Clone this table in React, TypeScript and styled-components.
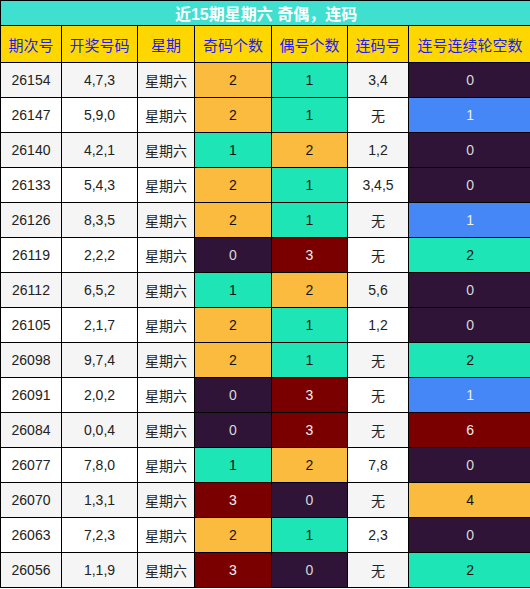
import React from "react";
import styled, { createGlobalStyle } from "styled-components";

const GlobalStyle = createGlobalStyle`
  html, body { margin: 0; padding: 0; background: #ffffff; overflow: hidden; }
  body { font-family: "Liberation Sans", "Noto Sans CJK SC", Arial, sans-serif; }
`;

const Table = styled.table`
  width: 531px;
  border-collapse: collapse;
  table-layout: fixed;
  font-family: "Liberation Sans", "Noto Sans CJK SC", Arial, sans-serif;
`;

const TitleCell = styled.th`
  height: 24px;
  padding: 0;
  background: #40e0d0;
  color: #ffffff;
  font-size: 16px;
  font-weight: bold;
  text-align: center;
  border: 1px solid #000;
  font-family: "Liberation Sans", "Noto Sans CJK SC", sans-serif;
`;

const HeadCell = styled.th`
  height: 36px;
  padding: 0;
  background: #ffd700;
  color: #1c1cf0;
  font-size: 15px;
  font-weight: normal;
  text-align: center;
  border: 1px solid #000;
  font-family: "Noto Sans CJK SC", sans-serif;
`;

const Row = styled.tr<{ $alt: boolean }>`
  height: 35px;
  background: ${(p) => (p.$alt ? "#f5f5f5" : "#ffffff")};
`;

const palette: Record<string, { bg: string; fg: string }> = {
  purple: { bg: "#2f1437", fg: "#d8d8d8" },
  teal: { bg: "#1de5b6", fg: "#111111" },
  orange: { bg: "#fbbb3e", fg: "#111111" },
  maroon: { bg: "#7a0000", fg: "#f0f0f0" },
  blue: { bg: "#4587f6", fg: "#f0f0f0" },
};

const Cell = styled.td<{ $tone?: string }>`
  padding: 0;
  text-align: center;
  font-size: 14px;
  color: ${(p) => (p.$tone ? palette[p.$tone].fg : "#222222")};
  background: ${(p) => (p.$tone ? palette[p.$tone].bg : "transparent")};
  border: 1px solid #000;
`;

const CjkCell = styled(Cell)`
  font-family: "Noto Sans CJK SC", sans-serif;
  font-size: 14px;
`;

const countTone = ["purple", "teal", "orange", "maroon"];
const gapTone: Record<number, string> = { 0: "purple", 1: "blue", 2: "teal", 4: "orange", 6: "maroon" };

const rows: [string, string, number, number, string, number][] = [
  ["26154", "4,7,3", 2, 1, "3,4", 0],
  ["26147", "5,9,0", 2, 1, "无", 1],
  ["26140", "4,2,1", 1, 2, "1,2", 0],
  ["26133", "5,4,3", 2, 1, "3,4,5", 0],
  ["26126", "8,3,5", 2, 1, "无", 1],
  ["26119", "2,2,2", 0, 3, "无", 2],
  ["26112", "6,5,2", 1, 2, "5,6", 0],
  ["26105", "2,1,7", 2, 1, "1,2", 0],
  ["26098", "9,7,4", 2, 1, "无", 2],
  ["26091", "2,0,2", 0, 3, "无", 1],
  ["26084", "0,0,4", 0, 3, "无", 6],
  ["26077", "7,8,0", 1, 2, "7,8", 0],
  ["26070", "1,3,1", 3, 0, "无", 4],
  ["26063", "7,2,3", 2, 1, "2,3", 0],
  ["26056", "1,1,9", 3, 0, "无", 2],
];

const widths = [61, 76, 57, 77, 76, 61, 123];
const headers = ["期次号", "开奖号码", "星期", "奇码个数", "偶号个数", "连码号", "连号连续轮空数"];

export default function App() {
  return (
    <>
      <GlobalStyle />
      <Table>
        <colgroup>
          {widths.map((w, i) => (
            <col key={i} style={{ width: w }} />
          ))}
        </colgroup>
        <thead>
          <tr>
            <TitleCell colSpan={7}>近15期星期六 奇偶，连码</TitleCell>
          </tr>
          <tr>
            {headers.map((h) => (
              <HeadCell key={h}>{h}</HeadCell>
            ))}
          </tr>
        </thead>
        <tbody>
          {rows.map(([issue, nums, odd, even, lian, gap], i) => (
            <Row key={issue} $alt={i % 2 === 0}>
              <Cell>{issue}</Cell>
              <Cell>{nums}</Cell>
              <CjkCell>星期六</CjkCell>
              <Cell $tone={countTone[odd]}>{odd}</Cell>
              <Cell $tone={countTone[even]}>{even}</Cell>
              {lian === "无" ? <CjkCell>{lian}</CjkCell> : <Cell>{lian}</Cell>}
              <Cell $tone={gapTone[gap]}>{gap}</Cell>
            </Row>
          ))}
        </tbody>
      </Table>
    </>
  );
}
